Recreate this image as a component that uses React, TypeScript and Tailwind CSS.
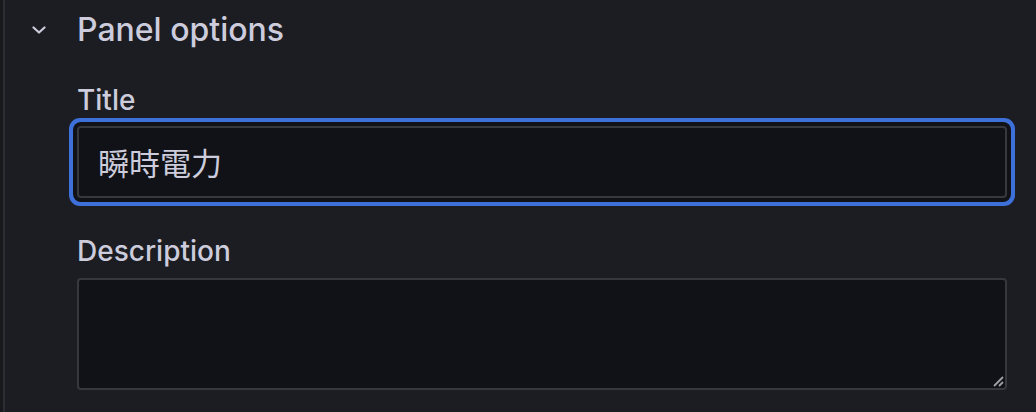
import React from "react";

export default function App() {
  return (
    <div
      className="flex h-[412px] w-[1036px] overflow-hidden bg-[#1b1d22] text-[#ccccdc]"
      style={{ fontFamily: "Inter, 'Noto Sans CJK TC', sans-serif" }}
    >
      <div className="w-[3px] shrink-0 bg-[#17191d]" />
      <div className="w-[2px] shrink-0 bg-[#2b2d33]" />
      <div className="flex flex-1 flex-col">
        <div className="mt-[10px] flex h-[40px] items-center">
          <div className="ml-[27px] flex w-[14px] items-center">
            <svg width="14" height="8" viewBox="0 0 14 8" fill="none">
              <path d="M1.5 1.5 L7 6.5 L12.5 1.5" stroke="#ccccdc" strokeWidth="2.2" strokeLinecap="round" strokeLinejoin="round" />
            </svg>
          </div>
          <div className="ml-[31px] text-[32px] leading-[40px] font-[450]">Panel options</div>
        </div>
        <div className="ml-[72px] mr-[29px] flex flex-col">
          <label className="mt-[34px] text-[28px] leading-[32px] font-medium">Title</label>
          <div className="mt-[10px] flex h-[72px] items-center rounded-[4px] border-2 border-[#37383e] bg-[#111217] shadow-[0_0_0_4px_#111217,0_0_0_8px_#3d71d9]">
            <input
              readOnly
              value="瞬時電力"
              className="w-full bg-transparent pl-[19px] text-[31px] leading-[40px] text-[#ccccdc] outline-none"
              style={{ fontFamily: "'Noto Sans CJK TC', Inter, sans-serif" }}
            />
          </div>
          <label className="mt-[37px] text-[28px] leading-[32px] font-medium">Description</label>
          <div className="relative mt-[11px]">
            <textarea className="block h-[112px] w-full resize-none rounded-[4px] border-2 border-[#37383e] bg-[#111217] outline-none" />
            <svg className="absolute bottom-[3px] right-[3px]" width="12" height="12" viewBox="0 0 12 12" fill="none">
              <path d="M2 11 L11 2" stroke="#a0a0a8" strokeWidth="1.8" />
              <path d="M7 11 L11 7" stroke="#a0a0a8" strokeWidth="1.8" />
            </svg>
          </div>
        </div>
      </div>
    </div>
  );
}
